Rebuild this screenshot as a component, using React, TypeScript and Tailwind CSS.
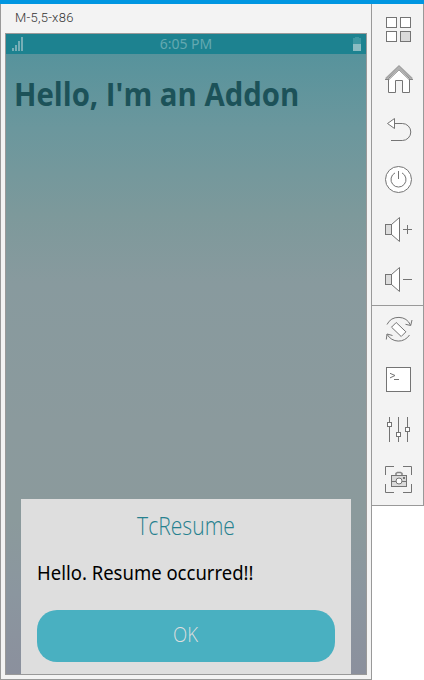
import type { ReactNode } from "react";

type CellProps = { top: number; height?: number; children: ReactNode };

/* One toolbar button; drawings use window coordinates through the viewBox. */
function Tool({ top, height = 50, children }: CellProps) {
  return (
    <button type="button" className="block w-[51px] shrink-0">
      <svg
        width="51"
        height={height}
        viewBox={`372 ${top} 51 ${height}`}
        fill="none"
        stroke="#747474"
        className="block"
      >
        {children}
      </svg>
    </button>
  );
}

function Speaker({ y }: { y: number }) {
  return (
    <>
      <path d={`M391.5 ${y - 5}L399.5 ${y - 12}V${y + 12}L391.5 ${y + 5}Z`} fill="#fff" />
      <rect x="385.5" y={y - 5} width="6" height="10" fill="#dcdcdc" />
      <path d={`M403 ${y}H412`} />
    </>
  );
}

function Toolbar() {
  return (
    <aside className="flex h-[502px] w-[52px] shrink-0 flex-col border-r border-b border-[#999] bg-[#f3f3f3]">
      <div className="flex h-[301px] shrink-0 flex-col">
        <Tool top={4}>
          <rect x="386.5" y="17.5" width="10" height="10" fill="#fff" />
          <rect x="400.5" y="17.5" width="10" height="10" fill="#fff" />
          <rect x="386.5" y="31.5" width="10" height="10" fill="#fff" />
          <rect x="400.5" y="31.5" width="10" height="10" fill="#dadada" />
        </Tool>
        <Tool top={54}>
          <path d="M388.5 78.5V92.5H395.5V80.5H402.5V92.5H409.5V78.5L399 68.5Z" fill="#fff" />
          <path d="M386 78.8L399 66.8L412 78.8" stroke="#b0b0b0" strokeWidth="2.5" />
          <path d="M385 79.5H389L399 69.8L409 79.5H413" stroke="#858585" />
          <path d="M385.5 79L399 65.8L412.5 79" stroke="#999" strokeWidth="0.8" />
        </Tool>
        <Tool top={104}>
          <path d="M394.5 123.5H402.3A8.5 8.5 0 0 1 402.3 140.5H391" />
          <path d="M387.5 123.5L394.5 118.5V128.5Z" fill="#fff" />
        </Tool>
        <Tool top={154}>
          <circle cx="398.5" cy="179.5" r="13" fill="#fff" />
          <path d="M395 172.9A7.5 7.5 0 1 0 402 172.9M398.5 171V179" />
        </Tool>
        <Tool top={204}>
          <Speaker y={229.5} />
          <path d="M407.5 225V234" />
        </Tool>
        <Tool top={254}>
          <Speaker y={279.5} />
        </Tool>
      </div>
      <div className="flex flex-col border-t border-[#999]">
        <Tool top={306} height={48}>
          <path d="M387 324.5A13 13 0 0 1 410.5 325.2M412 320L410.7 325.5L405.5 324.3" />
          <path d="M409.5 335A13 13 0 0 1 387.2 334.5M386.3 339.5L387 334L392.5 335.5" />
          <path d="M396.2 322.5L391.5 327.2L401.2 336.5L405.9 331.8Z" fill="#fff" />
        </Tool>
        <Tool top={354}>
          <rect x="386.5" y="367.5" width="24" height="24" fill="#fff" />
          <path d="M390 373.3L395 375.5L390 377.9M394 379.5H399" />
        </Tool>
        <Tool top={404}>
          <path d="M389.5 417V442M398.5 417V442M407.5 417V442" />
          <g fill="#fff">
            <rect x="387.5" y="422.5" width="4" height="4" />
            <rect x="396.5" y="432.5" width="4" height="4" />
            <rect x="405.5" y="427.5" width="4" height="4" />
          </g>
        </Tool>
        <Tool top={454}>
          <path d="M385.5 475V466.5H394M403 466.5H411.5V475M411.5 484V492.5H403M394 492.5H385.5V484" />
          <path d="M396 475V473.5L397.5 472.5H400.5L402 473.5V475" strokeWidth="1.5" stroke="#858585" />
          <rect x="391.5" y="475.5" width="15" height="11" fill="#dadada" />
          <path d="M392 481.5H406" />
          <circle cx="399" cy="481" r="3" fill="#fff" />
          <rect x="403" y="477" width="2" height="2" fill="#747474" stroke="none" />
        </Tool>
      </div>
    </aside>
  );
}

function StatusBar() {
  return (
    <div className="flex h-[20px] items-center justify-between bg-[#1d8290] pr-[5px] pl-[6px]">
      <svg width="12" height="14" viewBox="0 0 12 14" fill="#77aeb6">
        <path d="M0 11h2v3H0zM3 8h2v6H3zM6 4h2v10H6zM9 0h2v14H9z" />
      </svg>
      <div className="mr-[5px] whitespace-nowrap text-[14px] leading-[20px] text-[#64a9b1]">6:05 PM</div>
      <svg width="8" height="14" viewBox="0 0 8 14">
        <path d="M0 1h2V0h4v1h2v13H0z" fill="#3d97a2" />
        <path d="M0 7h8v7H0z" fill="#8bbcc2" />
      </svg>
    </div>
  );
}

function Dialog() {
  return (
    <section className="mx-[15px] flex h-[175px] flex-col bg-[#dedede] px-4 pt-[11px]">
      <h2 className="flex h-[32px] origin-center scale-x-[0.845] items-center justify-center whitespace-nowrap font-['Open_Sans'] text-[25px] font-light text-[#26818f]">
        TcResume
      </h2>
      <p className="mt-[15px] h-[32px] origin-left scale-x-[0.925] whitespace-nowrap font-['Noto_Sans'] text-[20px] leading-[32px] text-black">
        Hello. Resume occurred!!
      </p>
      <button
        type="button"
        className="mt-[21px] flex h-[52px] shrink-0 items-center justify-center rounded-[20px] bg-[#49b0c1] font-['Open_Sans'] text-[20px] font-light text-[#dedede]"
      >
        <span className="-mt-[2px] mr-[2px] scale-x-[0.93]">OK</span>
      </button>
    </section>
  );
}

export default function App() {
  return (
    <div className="flex h-[680px] w-[424px] flex-col overflow-hidden bg-white font-['Noto_Sans',sans-serif]">
      <div className="h-1 shrink-0 bg-[#0096e1]" />
      <div className="flex items-start">
        <main className="flex h-[676px] w-[372px] shrink-0 flex-col border-x border-b border-[#999] bg-[#f3f3f3] px-1 pb-1">
          <div className="h-[29px] shrink-0 pl-[10px] font-['Roboto'] text-[13px] leading-[27px] font-light tracking-[0.25px] whitespace-nowrap text-[#333]">
            M-5,5-x86
          </div>
          <div className="flex h-[642px] flex-col border border-[#999]">
            <StatusBar />
            <div className="flex grow flex-col justify-between bg-[linear-gradient(#57939c_0%,#6b979d_12%,#7d999b_26%,#889a9e_37%,#8b9a9d_60%,#8b9a9c_75%,#8b969f_87%,#8b909d_100%)]">
              <h1 className="mt-[18px] ml-[8px] origin-left scale-x-[0.917] whitespace-nowrap font-['Open_Sans'] text-[32px] leading-[44px] font-bold text-[#1c5259]">
                Hello, I'm an Addon
              </h1>
              <Dialog />
            </div>
          </div>
        </main>
        <Toolbar />
      </div>
    </div>
  );
}
